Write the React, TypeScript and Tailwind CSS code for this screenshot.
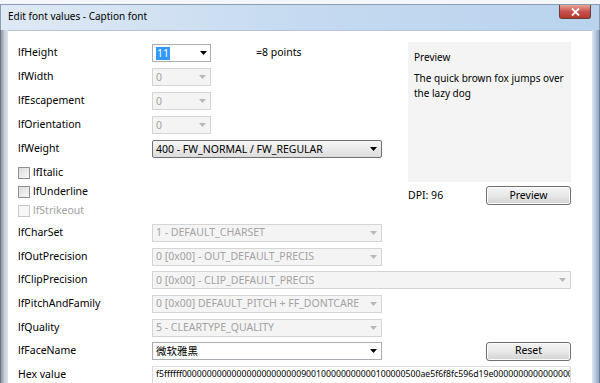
import React from 'react'

const font = { fontFamily: '"Noto Sans", "Noto Sans CJK SC", sans-serif' }

function Arrow({ disabled }: { disabled?: boolean }) {
  return (
    <svg width="7" height="4" viewBox="0 0 7 4" className="shrink-0">
      <path d="M0 0 H7 L3.5 4 Z" fill={disabled ? '#b8b8b8' : '#000'} />
    </svg>
  )
}

type ComboKind = 'edit' | 'list' | 'disabled'

function Combo({ width, kind, children }: { width: string; kind: ComboKind; children?: React.ReactNode }) {
  const box =
    kind === 'edit'
      ? 'bg-white border-[#abadb3]'
      : kind === 'list'
        ? 'bg-gradient-to-b from-[#f6f6f6] to-[#dddddd] border-[#707070] rounded-[2px]'
        : 'bg-[#f4f4f4] border-[#d5d5d5]'
  return (
    <div className={`${width} h-[18px] border flex items-center ${box}`}>
      <div className={`flex-1 pl-[3px] overflow-hidden whitespace-nowrap text-[10.5px] leading-[15px] ${kind === 'disabled' ? 'text-[#a3a3a3]' : 'text-black'}`}>
        {children}
      </div>
      <div className="w-[16px] h-full flex items-center justify-center">
        <Arrow disabled={kind === 'disabled'} />
      </div>
    </div>
  )
}

function Button({ label }: { label: string }) {
  return (
    <div className="w-[85px] h-[19px] border border-[#707070] rounded-[3px] bg-gradient-to-b from-[#f4f4f4] via-[#e8e8e8] to-[#d2d2d2] flex items-center justify-center text-[10.5px] text-black shadow-[inset_0_0_0_1px_#fcfcfc]">
      {label}
    </div>
  )
}

function Check({ label, disabled }: { label: string; disabled?: boolean }) {
  return (
    <div className="h-[19px] flex items-center gap-[3px]">
      <div className={`w-[12px] h-[12px] border ${disabled ? 'border-[#c8c8c8] bg-[#f6f6f6]' : 'border-[#8e8f8f] bg-gradient-to-br from-[#dcdcdc] to-[#f8f8f8]'}`} />
      <span className={`text-[10.5px] ${disabled ? 'text-[#a0a0a0]' : 'text-black'}`}>{label}</span>
    </div>
  )
}

function Row({ label, h = 'h-[24px]', children }: { label: string; h?: string; children?: React.ReactNode }) {
  return (
    <div className={`${h} flex items-center shrink-0`}>
      <div className="w-[134px] text-[10.5px] text-black">{label}</div>
      {children}
    </div>
  )
}

export default function App() {
  const hex = 'f5ffffff000000000000000000000000900100000000000100000500ae5f6f8fc596d19e0000000000000000000000'
  return (
    <div style={font} className="w-[600px] h-[383px] overflow-hidden bg-[#eef3f9] flex flex-col">
      {/* title bar */}
      <div className="h-[5px] shrink-0 bg-[#f4f6f9] border-b border-[#8c9db3]" />
      <div className="h-[25px] shrink-0 flex bg-gradient-to-r from-[#dfe9f5] via-[#c5daf0] to-[#b9d3ee] border-x border-[#8c9db3]">
        <div className="flex-1 pl-[7px] pt-[4px] text-[10px] text-black">Edit font values - Caption font</div>
        <div className="w-[32px] h-[14px] mr-[8px] rounded-b-[3px] border border-t-0 border-[#6d3a3a] bg-gradient-to-b from-[#e8a493] via-[#c75050] to-[#b43a2a] flex items-center justify-center">
          <svg width="9" height="8" viewBox="0 0 9 8">
            <path d="M1 0.5 L8 7.5 M8 0.5 L1 7.5" stroke="#fff" strokeWidth="1.8" />
          </svg>
        </div>
      </div>
      {/* body */}
      <div className="flex-1 flex">
        <div className="w-[8px] bg-gradient-to-r from-[#8e97a6] via-[#c6ced9] to-[#dde4ee] border-l border-[#6f7785]" />
        <div className="flex-1 bg-white pl-[10px] pt-[10px] border-t border-[#b7c4d4]">
          <div className="flex">
            <div className="w-[390px]">
              <Row label="lfHeight">
                <div className="w-[59px] h-[18px] border border-[#abadb3] bg-white flex items-center">
                  <div className="flex-1 pl-[3px] flex items-center">
                    <span className="bg-[#3399ff] text-white text-[10.5px] leading-[13px] px-[1px]">11</span>
                  </div>
                  <div className="w-[14px] h-full flex items-center justify-center">
                    <Arrow />
                  </div>
                </div>
                <span className="ml-[45px] text-[10.5px] text-black">=8 points</span>
              </Row>
              <Row label="lfWidth">
                <Combo width="w-[59px]" kind="disabled">0</Combo>
              </Row>
              <Row label="lfEscapement">
                <Combo width="w-[59px]" kind="disabled">0</Combo>
              </Row>
              <Row label="lfOrientation">
                <Combo width="w-[59px]" kind="disabled">0</Combo>
              </Row>
              <Row label="lfWeight">
                <Combo width="w-[230px]" kind="list">400 - FW_NORMAL / FW_REGULAR</Combo>
              </Row>
              <div className="mt-[2px]">
                <Check label="lfItalic" />
                <Check label="lfUnderline" />
                <Check label="lfStrikeout" disabled />
              </div>
            </div>
            <div className="w-[163px] pt-[1px]">
              <div className="h-[140px] bg-[#f4f4f4] px-[6px] pt-[8px] text-[10px] text-black leading-[15px]">
                <div>Preview</div>
                <div className="mt-[6px]">The quick brown fox jumps over the lazy dog</div>
              </div>
              <div className="mt-[4px] flex items-center justify-between">
                <span className="text-[10.5px] text-black">DPI: 96</span>
                <Button label="Preview" />
              </div>
            </div>
          </div>
          <div className="mt-[1px]">
            <Row label="lfCharSet" h="h-[23.7px]">
              <Combo width="w-[230px]" kind="disabled">1 - DEFAULT_CHARSET</Combo>
            </Row>
            <Row label="lfOutPrecision" h="h-[23.7px]">
              <Combo width="w-[230px]" kind="disabled">0 [0x00] - OUT_DEFAULT_PRECIS</Combo>
            </Row>
            <Row label="lfClipPrecision" h="h-[23.7px]">
              <Combo width="w-[419px]" kind="disabled">0 [0x00] - CLIP_DEFAULT_PRECIS</Combo>
            </Row>
            <Row label="lfPitchAndFamily" h="h-[23.7px]">
              <Combo width="w-[230px]" kind="disabled">0 [0x00] DEFAULT_PITCH + FF_DONTCARE</Combo>
            </Row>
            <Row label="lfQuality" h="h-[23.7px]">
              <Combo width="w-[230px]" kind="disabled">5 - CLEARTYPE_QUALITY</Combo>
            </Row>
            <Row label="lfFaceName" h="h-[23.7px]">
              <Combo width="w-[230px]" kind="edit">微软雅黑</Combo>
              <div className="ml-[104px]">
                <Button label="Reset" />
              </div>
            </Row>
            <Row label="Hex value" h="h-[23.7px]">
              <div className="w-[419px] h-[18px] border border-[#dcdcdc] bg-white flex items-center overflow-hidden">
                <span className="pl-[3px] whitespace-nowrap text-[8.7px] text-black">{hex}</span>
              </div>
            </Row>
          </div>
        </div>
        <div className="w-[8px] bg-gradient-to-r from-[#dde6f1] via-[#b7cbe3] to-[#8fa6c4] border-r border-[#6f7f96]" />
      </div>
    </div>
  )
}
